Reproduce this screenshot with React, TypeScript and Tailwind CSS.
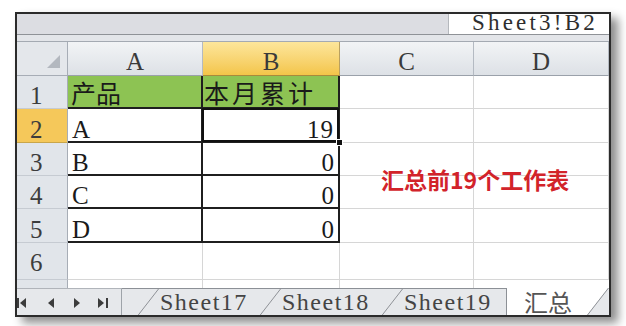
import React from "react";

const serif = "font-['Liberation_Serif','Noto_Sans_CJK_SC',serif]";
const cjk = "font-['Noto_Sans_CJK_SC',sans-serif]";

function Slash({ fill }: { fill?: boolean }) {
  return (
    <svg width="22" height="27" viewBox="0 0 22 27" className="shrink-0">
      {fill ? <polygon points="0,0 21,0 0,27" fill="#ffffff" /> : null}
      <line x1="0.5" y1="27" x2="21.5" y2="0" stroke="#8e9196" strokeWidth="1" />
    </svg>
  );
}

function NavArrows() {
  return (
    <svg width="105" height="27" viewBox="0 0 105 27" className="shrink-0">
      <rect x="0" y="9" width="2" height="10" fill="#3c3c3c" />
      <polygon points="9,9 3,14 9,19" fill="#3c3c3c" />
      <polygon points="37,9 31,14 37,19" fill="#3c3c3c" />
      <polygon points="57,9 63,14 57,19" fill="#3c3c3c" />
      <polygon points="81,9 87,14 81,19" fill="#3c3c3c" />
      <rect x="89" y="9" width="2" height="10" fill="#3c3c3c" />
    </svg>
  );
}

export default function App() {
  const rowHead =
    "flex items-end pb-[1px] pl-[13px] bg-[#e1e5ea] border-r border-b border-r-[#a7adb6] border-b-[#c6cbd2] text-[#3c3c3c] text-[25px] leading-[22px] " + serif;
  const rowHeadSel =
    "flex items-end pb-[1px] pl-[13px] bg-[#f5c85a] border-r border-b border-r-[#a7adb6] border-b-[#c9a64a] text-[#3c3c3c] text-[25px] leading-[22px] " + serif;
  const cellAB = "flex items-end bg-white border-r-2 border-b-2 border-[#1f1f1f] text-[#1a1a1a] text-[25px] leading-[22px] " + serif;
  const cellGreen = "flex items-end bg-[#8dc353] border-r-2 border-b-2 border-[#1f1f1f] text-[#1a1a1a] text-[25px] leading-[30px] " + cjk;
  const cellPlain = "bg-white border-r border-b border-[#d6d6d6]";
  const colHead =
    "flex items-end justify-center pb-[2px] bg-linear-to-b from-[#f2f4f6] to-[#dde1e6] border-r border-b border-r-[#b4bac2] border-b-[#9aa1aa] text-[#3a3a3a] text-[25px] leading-[22px] " + serif;
  const colHeadSel =
    "flex items-end justify-center pb-[2px] bg-linear-to-b from-[#fde69a] to-[#f3c548] border-r border-b border-r-[#b9a060] border-b-[#a88a3c] text-[#3a3a3a] text-[25px] leading-[22px] " + serif;

  return (
    <div className="w-[626px] h-[326px] bg-white overflow-hidden pl-[15px] pt-[12px]">
      <div className="w-[596px] h-[305px] border-2 border-[#2b2b2b] shadow-[7px_6px_9px_rgba(0,0,0,0.45)] flex flex-col overflow-hidden bg-[#e1e3e7]">
        {/* formula / name bar */}
        <div className="h-[20px] flex shrink-0">
          <div className="flex-1 bg-[#dcdde2]" />
          <div className={"w-[161px] bg-white border-l border-[#b5b8bd] overflow-hidden whitespace-nowrap pl-[23px] text-[23px] leading-[18px] tracking-[3.2px] text-[#2e2e2e] " + serif}>
            Sheet3!B2
          </div>
        </div>
        <div className="h-[1px] bg-[#8f9297] shrink-0" />
        <div className="h-[7px] bg-[#e3e5e9] border-b border-[#a4aab2] shrink-0" />

        {/* grid */}
        <div className="relative grid grid-cols-[51px_135px_137px_134px_1fr] grid-rows-[34px_33px_34px_33px_33px_34px_37px_8px] shrink-0">
          {/* header row */}
          <div className="relative bg-[#e4e7eb] border-r border-b border-[#a7adb6]">
            <svg width="14" height="14" viewBox="0 0 14 14" className="absolute right-[6px] bottom-[6px]">
              <polygon points="13,0 13,13 0,13" fill="#b3b8bf" />
            </svg>
          </div>
          <div className={colHead}>A</div>
          <div className={colHeadSel}>B</div>
          <div className={colHead}>C</div>
          <div className={colHead}>D</div>

          {/* row 1 */}
          <div className={rowHead}>1</div>
          <div className={cellGreen + " pl-[3px]"}>产品</div>
          <div className={cellGreen + " pl-[1px] tracking-[3px]"}>本月累计</div>
          <div className={cellPlain} />
          <div className={cellPlain} />

          {/* row 2 */}
          <div className={rowHeadSel}>2</div>
          <div className={cellAB + " pl-[4px]"}>A</div>
          <div className={cellAB + " relative justify-end pr-[4px] tracking-[1px]"}>
            19
            <div className="absolute inset-[-1px] border-2 border-[#111] pointer-events-none">
              <div className="absolute inset-0 border border-white" />
            </div>
            <div className="absolute right-[-5px] bottom-[-5px] w-[7px] h-[7px] bg-[#111] border border-white" />
          </div>
          <div className={cellPlain} />
          <div className={cellPlain} />

          {/* row 3 */}
          <div className={rowHead}>3</div>
          <div className={cellAB + " pl-[4px]"}>B</div>
          <div className={cellAB + " justify-end pr-[4px]"}>0</div>
          <div className={cellPlain} />
          <div className={cellPlain} />

          {/* row 4 */}
          <div className={rowHead}>4</div>
          <div className={cellAB + " pl-[4px]"}>C</div>
          <div className={cellAB + " justify-end pr-[4px]"}>0</div>
          <div className={cellPlain} />
          <div className={cellPlain} />

          {/* row 5 */}
          <div className={rowHead}>5</div>
          <div className={cellAB + " pl-[4px]"}>D</div>
          <div className={cellAB + " justify-end pr-[4px]"}>0</div>
          <div className={cellPlain} />
          <div className={cellPlain} />

          {/* row 6 */}
          <div className={rowHead + " pb-[5px]"}>6</div>
          <div className={cellPlain} />
          <div className={cellPlain} />
          <div className={cellPlain} />
          <div className={cellPlain} />

          {/* row 7 partial */}
          <div className="bg-[#e1e5ea] border-r border-[#a7adb6]" />
          <div className="bg-white border-r border-[#d6d6d6]" />
          <div className="bg-white border-r border-[#d6d6d6]" />
          <div className="bg-white border-r border-[#d6d6d6]" />
          <div className="bg-white" />

          {/* floating text box */}
          <div className={"absolute left-[364px] top-[124px] text-[23px] leading-[26px] font-bold text-[#d2232a] whitespace-nowrap " + cjk}>
            汇总前19个工作表
          </div>
        </div>

        {/* sheet tabs */}
        <div className="h-[27px] flex shrink-0 bg-[#e6e8eb]">
          <div className="w-[105px] h-full border-t border-r border-t-[#b0b4ba] border-r-[#9ea3a9] flex items-center">
            <NavArrows />
          </div>
          <div className="flex h-full border-t border-[#8c9096]">
            <div className="w-[15px]" />
            <Slash />
            <div className={"w-[100px] pl-[1px] h-full flex items-center text-[24px] tracking-[1.5px] text-[#444] " + serif}>Sheet17</div>
            <Slash />
            <div className={"w-[100px] pl-[1px] h-full flex items-center text-[24px] tracking-[1.5px] text-[#444] " + serif}>Sheet18</div>
            <Slash />
            <div className={"w-[103px] pl-[1px] h-full flex items-center text-[24px] tracking-[1.5px] text-[#444] " + serif}>Sheet19</div>
          </div>
          <div className="flex h-full border-l border-[#8c9096]">
            <div className={"w-[80px] h-full bg-white flex items-center pl-[17px] text-[24px] text-[#555] " + cjk}>汇总</div>
            <Slash fill />
          </div>
          <div className="flex-1 h-full" />
        </div>
      </div>
    </div>
  );
}
